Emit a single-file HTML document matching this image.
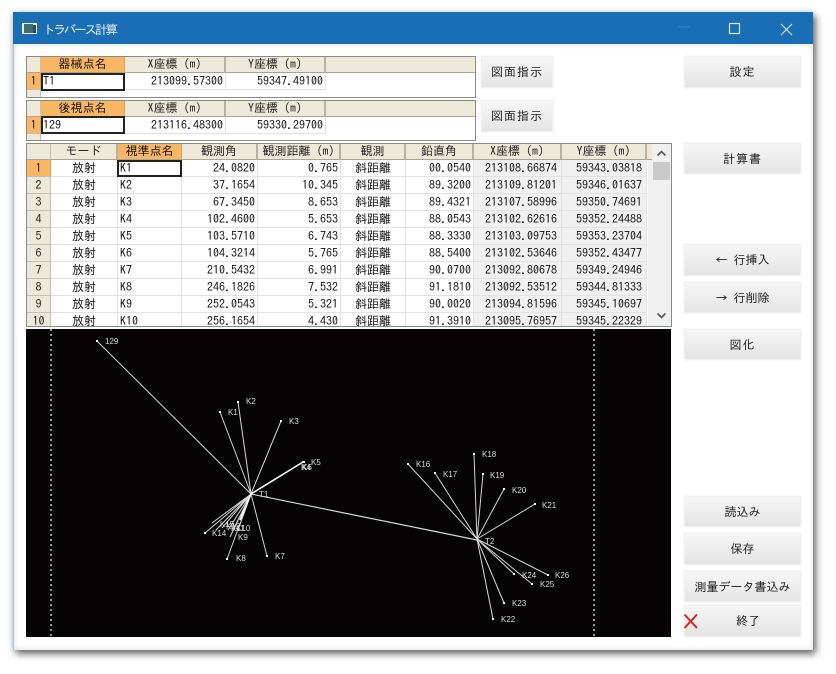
<!DOCTYPE html>
<html lang="ja"><head><meta charset="utf-8">
<style>
html,body{margin:0;padding:0;width:836px;height:674px;overflow:hidden;background:#fff}
body{font-family:"IPAGothic","Liberation Sans","Noto Sans CJK JP",sans-serif;font-size:12px;color:#111;position:relative}
div{box-sizing:border-box}
.abs{position:absolute}
#wrap{position:absolute;left:0;top:0;width:836px;height:674px;filter:blur(.35px)}
#win{position:absolute;left:13px;top:12px;width:800px;height:638px;background:#fff;box-shadow:3px 4px 7px rgba(60,60,60,.75),-1px 0 6px rgba(120,120,120,.25);border-left:1px solid #a9c6e6}
#tb{position:absolute;left:13px;top:12px;width:800px;height:32px;background:#196eb6}
#inner{position:absolute;left:14px;top:44px;width:799px;height:606px;background:#fff;box-shadow:inset 0 0 6px #d8d8d8}
.t{position:absolute;left:43px;top:23px;font-size:12.5px;letter-spacing:-2.1px;line-height:13px;color:#e8f1f9}
.g{position:absolute;background:#fff;border:1px solid #8a8a85;overflow:hidden}
table{border-collapse:separate;border-spacing:0;table-layout:fixed;position:absolute;left:0;top:0}
td{padding:0;height:17px;line-height:16px;border-right:1px solid #e2e2e2;border-bottom:1px solid #e2e2e2;white-space:nowrap;overflow:hidden;text-align:center;box-sizing:border-box;font-size:12px}
td.h{background:#ece9d8;border-right:2px solid #b5b2a2;border-bottom:1px solid #a8a594;color:#222;height:16px;line-height:15px}
td.o{background:#f9b763;border-right:1px solid #d9a057;border-bottom:1px solid #a8a594;color:#111}
td.n{background:#ece9d8;border-right:1px solid #c4c1b0;border-bottom:1px solid #c4c1b0;color:#222}
td.no{background:#f9b763;border-right:1px solid #d9a057;border-bottom:1px solid #c4c1b0;color:#222}
td.r{text-align:right;padding-right:2px}
td.l{text-align:left;padding-left:2px}
td.y{background:#f0f0f0;text-align:right;padding-right:4px}
.sel{position:absolute;border:2px solid #222;background:transparent}
.b{position:absolute;background:linear-gradient(#f6f6f6,#e4e4e4);border:1px solid #f0f0f0;box-shadow:0 0 1px #ddd;text-align:center;color:#1c1c1c;font-size:12px;display:flex;align-items:center;justify-content:center;white-space:nowrap}
.s{letter-spacing:1px}
</style></head><body>
<div id="wrap">
<div id="win"></div>
<div id="tb"></div>
<div id="inner"></div>

<svg class="abs" style="left:21px;top:22px" width="17" height="14"><rect x="1" y="1" width="15" height="11" fill="#e4ecec"/><rect x="3" y="2" width="9" height="9" fill="#37706c"/><rect x="12" y="3" width="3" height="8" fill="#2c4a58"/></svg>
<div class="t">トラバース計算</div>
<svg class="abs" style="left:670px;top:16px" width="130" height="24" fill="none" stroke="#dfeaf5"><path d="M8 11h12" stroke="#3f84c0"/><rect x="59.5" y="7.5" width="10" height="10" stroke-width="1.2"/><path d="M111 8l11 11M122 8l-11 11" stroke-width="1.1"/></svg>

<!-- grid 1 -->
<div class="g" style="left:26px;top:56px;width:450px;height:42px">
<table style="width:448px"><colgroup><col style="width:14px"><col style="width:84px"><col style="width:101px"><col style="width:100px"><col style="width:149px"></colgroup>
<tr><td class="h" style="border-right:1px solid #c4c1b0"></td><td class="h o">器械点名</td><td class="h">X座標 (m)</td><td class="h">Y座標 (m)</td><td class="h" style="border-right:0"></td></tr>
<tr><td class="no">1</td><td class="l">T1</td><td class="r">213099.57300</td><td class="r">59347.49100</td><td style="border:0"></td></tr>
</table>
<div class="abs" style="left:0;top:33px;width:14px;height:8px;background:#ece9d8;border-right:1px solid #c4c1b0"></div>
</div>
<div class="sel" style="left:41px;top:73px;width:84px;height:18px"></div>

<!-- grid 2 -->
<div class="g" style="left:26px;top:100px;width:450px;height:41px">
<table style="width:448px"><colgroup><col style="width:14px"><col style="width:84px"><col style="width:101px"><col style="width:100px"><col style="width:149px"></colgroup>
<tr><td class="h" style="border-right:1px solid #c4c1b0"></td><td class="h o">後視点名</td><td class="h">X座標 (m)</td><td class="h">Y座標 (m)</td><td class="h" style="border-right:0"></td></tr>
<tr><td class="no">1</td><td class="l">129</td><td class="r">213116.48300</td><td class="r">59330.29700</td><td style="border:0"></td></tr>
</table>
<div class="abs" style="left:0;top:33px;width:14px;height:7px;background:#ece9d8;border-right:1px solid #c4c1b0"></div>
</div>
<div class="sel" style="left:41px;top:116px;width:84px;height:18px"></div>

<!-- grid 3 -->
<div class="g" style="left:26px;top:143px;width:646px;height:184px">
<table style="width:620px"><colgroup><col style="width:24px"><col style="width:67px"><col style="width:64px"><col style="width:76px"><col style="width:83px"><col style="width:65px"><col style="width:68px"><col style="width:88px"><col style="width:85px"></colgroup>
<tr><td class="h" style="border-right:1px solid #c4c1b0"></td><td class="h">モード</td><td class="h o">視準点名</td><td class="h">観測角</td><td class="h">観測距離 (m)</td><td class="h">観測</td><td class="h">鉛直角</td><td class="h">X座標 (m)</td><td class="h">Y座標 (m)</td></tr>
<tr><td class="no">1</td><td>放射</td><td class="l">K1</td><td class="r">24.0820</td><td class="r">0.765</td><td>斜距離</td><td class="r">00.0540</td><td class="y">213108.66874</td><td class="y">59343.03818</td></tr>
<tr><td class="n">2</td><td>放射</td><td class="l">K2</td><td class="r">37.1654</td><td class="r">10.345</td><td>斜距離</td><td class="r">89.3200</td><td class="y">213109.81201</td><td class="y">59346.01637</td></tr>
<tr><td class="n">3</td><td>放射</td><td class="l">K3</td><td class="r">67.3450</td><td class="r">8.653</td><td>斜距離</td><td class="r">89.4321</td><td class="y">213107.58996</td><td class="y">59350.74691</td></tr>
<tr><td class="n">4</td><td>放射</td><td class="l">K4</td><td class="r">102.4600</td><td class="r">5.653</td><td>斜距離</td><td class="r">88.0543</td><td class="y">213102.62616</td><td class="y">59352.24488</td></tr>
<tr><td class="n">5</td><td>放射</td><td class="l">K5</td><td class="r">103.5710</td><td class="r">6.743</td><td>斜距離</td><td class="r">88.3330</td><td class="y">213103.09753</td><td class="y">59353.23704</td></tr>
<tr><td class="n">6</td><td>放射</td><td class="l">K6</td><td class="r">104.3214</td><td class="r">5.765</td><td>斜距離</td><td class="r">88.5400</td><td class="y">213102.53646</td><td class="y">59352.43477</td></tr>
<tr><td class="n">7</td><td>放射</td><td class="l">K7</td><td class="r">210.5432</td><td class="r">6.991</td><td>斜距離</td><td class="r">90.0700</td><td class="y">213092.80678</td><td class="y">59349.24946</td></tr>
<tr><td class="n">8</td><td>放射</td><td class="l">K8</td><td class="r">246.1826</td><td class="r">7.532</td><td>斜距離</td><td class="r">91.1810</td><td class="y">213092.53512</td><td class="y">59344.81333</td></tr>
<tr><td class="n">9</td><td>放射</td><td class="l">K9</td><td class="r">252.0543</td><td class="r">5.321</td><td>斜距離</td><td class="r">90.0020</td><td class="y">213094.81596</td><td class="y">59345.10697</td></tr>
<tr><td class="n">10</td><td>放射</td><td class="l">K10</td><td class="r">256.1654</td><td class="r">4.430</td><td>斜距離</td><td class="r">91.3910</td><td class="y">213095.76957</td><td class="y">59345.22329</td></tr>
</table>
<div class="abs" style="left:621px;top:0;width:23px;height:182px;background:#f0f0f0"></div>
<div class="abs" style="left:620px;top:0;width:5px;height:16px;background:#ece9d8;border-bottom:1px solid #a8a594"></div>
<div class="abs" style="left:626px;top:18px;width:17px;height:18px;background:#c9c9c9"></div>
<svg class="abs" style="left:621px;top:0" width="23" height="182" fill="none" stroke="#555" stroke-width="1.6"><path d="M9.5 11.5l4-4 4 4M9.5 169.5l4 4 4-4"/></svg>
</div>
<div class="sel" style="left:117px;top:160px;width:65px;height:17px"></div>

<!-- drawing -->
<svg class="abs" style="left:26px;top:329px;background:#050303" width="645" height="308" viewBox="26 329 645 308" font-family="'Liberation Sans',sans-serif" font-size="8" fill="#dcdcdc">
<g stroke="#d8d8d8" stroke-width="1" stroke-dasharray="2 3" fill="none"><path d="M51 329V637M594 329V637" stroke-width="1.4"/></g>
<g stroke="#d6d6d6" stroke-width="1" fill="none">
<path d="M97 341L251 494"/>
<path d="M251 494L477 540" stroke-width="1.2"/>
<path d="M251 494L220 412M251 494L238 402M251 494L281 421M251 494L303 462M251 494L295 467M251 494L267 556M251 494L227 559M251 494L230 537M251 494L238 530M251 494L233 530M251 494L228 530M251 494L222 528M251 494L216 530M251 494L212 523M251 494L205 533"/>
<path d="M477 539L408 464M477 539L435 473M477 539L474 454M477 539L483 474M477 539L504 489M477 539L535 504M477 539L493 619M477 539L504 603M477 539L514 574M477 539L532 584M477 539L548 575"/>
</g>
<path d="M251 494L303 462M251 494L240 520" stroke="#fff" stroke-width="1.6"/>
<g fill="#fff"><rect x="96" y="340" width="2" height="2"/><rect x="219" y="411" width="2" height="2"/><rect x="237" y="401" width="2" height="2"/><rect x="280" y="420" width="2" height="2"/><rect x="302" y="461" width="3" height="2"/><rect x="266" y="555" width="2" height="2"/><rect x="226" y="558" width="2" height="2"/><rect x="204" y="532" width="2" height="2"/><rect x="407" y="463" width="2" height="2"/><rect x="434" y="472" width="2" height="2"/><rect x="473" y="453" width="2" height="2"/><rect x="482" y="473" width="2" height="2"/><rect x="503" y="488" width="2" height="2"/><rect x="534" y="503" width="2" height="2"/><rect x="492" y="618" width="2" height="2"/><rect x="503" y="602" width="2" height="2"/><rect x="513" y="573" width="2" height="2"/><rect x="531" y="583" width="2" height="2"/><rect x="547" y="574" width="2" height="2"/></g>
<text x="105" y="344">129</text>
<text x="228" y="415">K1</text><text x="246" y="404">K2</text><text x="289" y="424">K3</text>
<text x="311" y="465">K5</text><text x="301" y="470">K4</text><text x="302" y="470">K6</text>
<text x="259" y="497">T1</text><text x="275" y="559">K7</text><text x="236" y="561">K8</text>
<text x="238" y="540">K9</text><text x="236" y="531">K10</text><text x="231" y="531">K11</text><text x="226" y="529">K12</text>
<text x="220" y="527">K15</text><text x="212" y="536">K14</text>
<text x="416" y="467">K16</text><text x="443" y="477">K17</text><text x="482" y="457">K18</text><text x="490" y="478">K19</text><text x="512" y="493">K20</text><text x="542" y="508">K21</text>
<text x="485" y="544">T2</text><text x="522" y="578">K24</text><text x="540" y="587">K25</text><text x="555" y="578">K26</text><text x="512" y="606">K23</text><text x="501" y="622">K22</text>
</svg>

<!-- buttons -->
<div class="b s" style="left:481px;top:56px;width:72px;height:32px">図面指示</div>
<div class="b s" style="left:481px;top:100px;width:72px;height:32px">図面指示</div>
<div class="b s" style="left:684px;top:56px;width:117px;height:32px">設定</div>
<div class="b s" style="left:684px;top:143px;width:117px;height:31px">計算書</div>
<div class="b" style="left:684px;top:244px;width:117px;height:32px">← 行挿入</div>
<div class="b" style="left:684px;top:282px;width:117px;height:31px">→ 行削除</div>
<div class="b s" style="left:684px;top:329px;width:117px;height:31px">図化</div>
<div class="b" style="left:684px;top:496px;width:117px;height:31px">読込み</div>
<div class="b" style="left:684px;top:533px;width:117px;height:32px">保存</div>
<div class="b" style="left:684px;top:571px;width:117px;height:31px">測量データ書込み</div>
<div class="b" style="left:684px;top:605px;width:117px;height:32px;padding-left:11px">終了</div>
<svg class="abs" style="left:683px;top:613px" width="16" height="16" fill="none" stroke="#d8231f" stroke-width="2"><path d="M1.5 1.5L14 15M14 1.5L1.5 15"/></svg>
</div>
</body></html>
